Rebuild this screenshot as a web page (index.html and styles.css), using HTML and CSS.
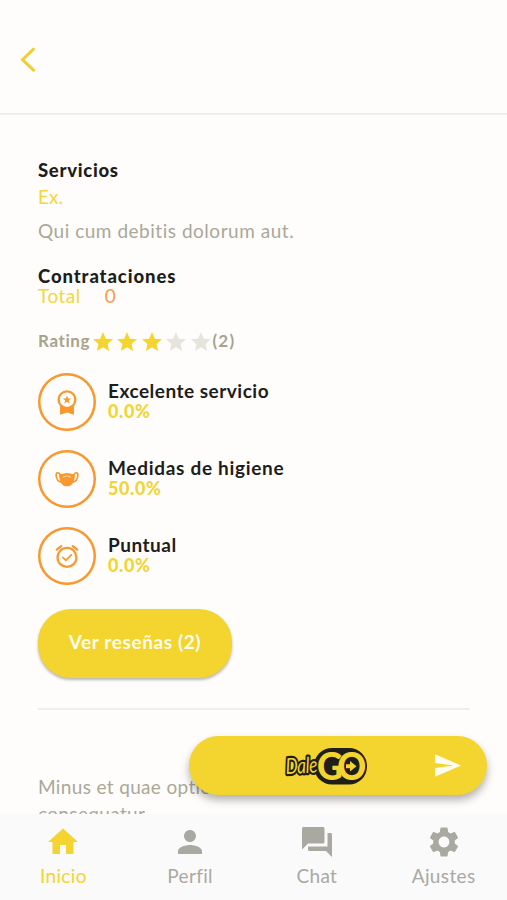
FILE: index.html
```html
<!DOCTYPE html>
<html lang="es">
<head>
<meta charset="utf-8">
<meta name="viewport" content="width=device-width, initial-scale=1">
<title>DaleGO</title>
<link rel="stylesheet" href="styles.css">
</head>
<body>
<div class="app">
  <header class="header">
    <svg class="back" viewBox="0 0 16 26"><path d="M13.500 2.200 2.500 12.700l11 10.500"/></svg>
  </header>
  <main class="content">
    <h2 class="title"><span class="t-serv">Servicios</span></h2>
    <p class="category">Ex.</p>
    <p class="description">Qui cum debitis dolorum aut.</p>
    <h2 class="title hires"><span class="t-cont">Contrataciones</span></h2>
    <p class="total"><span>Total</span><span class="count">0</span></p>
    <div class="rating">
      <span class="rating-label">Rating</span>
      <div class="stars">
        <svg class="star on" viewBox="2 2 20 19"><path d="M12 17.270 18.180 21l-1.640-7.030L22 9.240l-7.190-.61L12 2 9.190 8.630 2 9.240l5.460 4.730L5.820 21z"/></svg>
        <svg class="star on" viewBox="2 2 20 19"><path d="M12 17.270 18.180 21l-1.640-7.030L22 9.240l-7.190-.61L12 2 9.190 8.630 2 9.240l5.460 4.730L5.820 21z"/></svg>
        <svg class="star on" viewBox="2 2 20 19"><path d="M12 17.270 18.180 21l-1.640-7.030L22 9.240l-7.190-.61L12 2 9.190 8.630 2 9.240l5.460 4.730L5.820 21z"/></svg>
        <svg class="star" viewBox="2 2 20 19"><path d="M12 17.270 18.180 21l-1.640-7.030L22 9.240l-7.190-.61L12 2 9.190 8.630 2 9.240l5.460 4.730L5.820 21z"/></svg>
        <svg class="star" viewBox="2 2 20 19"><path d="M12 17.270 18.180 21l-1.640-7.030L22 9.240l-7.190-.61L12 2 9.190 8.630 2 9.240l5.460 4.730L5.820 21z"/></svg>
      </div>
      <span class="rating-count">(2)</span>
    </div>
    <ul class="metrics">
      <li class="metric">
        <span class="ring"><svg viewBox="0 0 28 28"><path class="fill" d="M6.500 17.500h15V27.800L14 25.300 6.500 27.800z"/><circle class="disc" cx="14" cy="11.500" r="9"/><path class="fill" d="m14 7 1.200 3.100 3.300.1-2.600 2.100.9 3.200-2.800-1.800-2.800 1.800.9-3.200-2.600-2.100 3.300-.1z"/></svg></span>
        <div class="metric-text"><span class="metric-name m1">Excelente servicio</span><span class="metric-value">0.0%</span></div>
      </li>
      <li class="metric">
        <span class="ring"><svg viewBox="0 0 28 28"><path class="fill" d="M5.500 8.500c3 .8 5.700-1 8.500-1s5.500 1.800 8.500 1c0 8-2.800 13.300-8.500 13.300S5.500 16.500 5.500 8.500z"/><path class="line" d="M5.800 8.300C3.500 6.300 2 7.500 2.300 10.200c.4 3.700 2 6.500 5 6.900M22.200 8.300c2.300-2 3.800-.8 3.500 1.900-.4 3.700-2 6.500-5 6.900"/><path class="crease" d="M10 11.800q4-2.700 8 0"/></svg></span>
        <div class="metric-text"><span class="metric-name m2">Medidas de higiene</span><span class="metric-value">50.0%</span></div>
      </li>
      <li class="metric">
        <span class="ring"><svg viewBox="0 0 28 28"><circle class="clock" cx="14" cy="15.500" r="10.200"/><path class="bell" d="M3 7.200 7.800 3.300M20.200 3.300 25 7.200"/><path class="tick" d="m9.500 15.500 3.200 3.200 6-6"/></svg></span>
        <div class="metric-text"><span class="metric-name m3">Puntual</span><span class="metric-value">0.0%</span></div>
      </li>
    </ul>
    <button class="reviews">Ver reseñas (2)</button>
    <hr class="divider">
    <p class="comment">Minus et quae optio<br>consequatur.</p>
  </main>
  <button class="hire" aria-label="DaleGO">
    <svg class="logo" viewBox="0 0 84 38">
      <rect class="dark" x="30" y="1" width="53" height="36.500" rx="18"/>
      <g class="dale" transform="translate(2 27) rotate(-3) scale(.78 1)"><text>Dale</text></g>
      <g class="go" transform="translate(33 33) scale(.94 1)"><text>GO</text></g>
      <path class="yellow" d="M62 17.200h4V14l6.500 5.300-6.500 5.200v-3.300h-4z"/>
    </svg>
    <svg class="send" viewBox="2 3 21 18"><path d="M2.010 21 23 12 2.010 3 2 10l15 2-15 2z"/></svg>
  </button>
  <nav class="tabs">
    <a class="tab active"><svg viewBox="0 0 24 24"><path d="M10 20v-6h4v6h5v-8h3L12 3 2 12h3v8z"/></svg><span>Inicio</span></a>
    <a class="tab"><svg viewBox="0 0 24 24"><path d="M12 12c2.210 0 4-1.790 4-4s-1.790-4-4-4-4 1.790-4 4 1.790 4 4 4zm0 2c-2.670 0-8 1.340-8 4v2h16v-2c0-2.660-5.330-4-8-4z"/></svg><span>Perfil</span></a>
    <a class="tab"><svg viewBox="0 0 24 24"><path d="M21 6h-2v9H6v2c0 .55.45 1 1 1h11l4 4V7c0-.55-.45-1-1-1zm-4 6V3c0-.55-.45-1-1-1H3c-.55 0-1 .45-1 1v14l4-4h10c.55 0 1-.45 1-1z"/></svg><span>Chat</span></a>
    <a class="tab"><svg viewBox="0 0 24 24"><path d="M19.140 12.940c.04-.3.060-.61.060-.94 0-.32-.02-.64-.07-.94l2.030-1.580c.18-.14.23-.41.120-.61l-1.920-3.320c-.12-.22-.37-.29-.59-.22l-2.390.96c-.5-.38-1.030-.7-1.620-.94l-.36-2.540c-.04-.24-.24-.41-.48-.41h-3.840c-.24 0-.43.17-.47.41l-.36 2.540c-.59.24-1.130.57-1.620.94l-2.390-.96c-.22-.08-.47 0-.59.22L2.740 8.870c-.12.21-.08.47.120.61l2.030 1.580c-.05.3-.09.63-.09.94s.02.64.07.94l-2.030 1.580c-.18.14-.23.41-.12.61l1.920 3.320c.12.22.37.29.59.22l2.390-.96c.5.38 1.030.7 1.620.94l.36 2.540c.05.24.24.41.48.41h3.840c.24 0 .44-.17.47-.41l.36-2.540c.59-.24 1.130-.56 1.620-.94l2.390.96c.22.080.47 0 .59-.22l1.920-3.320c.12-.22.070-.47-.12-.61l-2.010-1.580zM12 15.600c-1.980 0-3.600-1.620-3.600-3.600s1.620-3.600 3.600-3.600 3.600 1.620 3.600 3.600-1.620 3.600-3.600 3.600z"/></svg><span>Ajustes</span></a>
  </nav>
</div>
</body>
</html>
```
FILE: styles.css
```css
* { box-sizing: border-box; }
body, h2, p, ul { margin: 0; padding: 0; }
body {
  background: #fefdfb;
  color: #1d1d1b;
  font-family: Lato, "Open Sans", sans-serif;
  font-size: 19px;
  line-height: 20px;
  overflow: hidden;
}
svg { display: block; }
button { border: 0; padding: 0; font: inherit; }
.app { position: relative; display: flex; flex-direction: column; height: 900px; overflow: hidden; }
.header { flex: none; height: 115px; border-bottom: 2px solid #efeeec; padding: 47px 0 0 19.500px; }
.back { width: 16px; height: 26px; fill: none; stroke: #f0cf32; stroke-width: 3; stroke-linecap: round; }
.content { flex: 1; min-height: 0; overflow: hidden; padding: 45px 37px 0 38px; white-space: nowrap; }
.title { font-size: 18.500px; line-height: 20px; font-weight: 900; }
.t-serv { letter-spacing: .7px; }
.t-cont { letter-spacing: .9px; }
.category { margin-top: 7px; color: #f3d640; }
.description { margin-top: 14px; color: #a9a899; letter-spacing: .52px; }
.hires { margin-top: 25px; }
.total { display: flex; gap: 24px; color: #f3d640; letter-spacing: .5px; }
.count { color: #fa9c49; }
.rating { display: flex; align-items: center; height: 20px; margin-top: 25px; color: #a5a48c; font-size: 17px; font-weight: 700; }
.rating-label { width: 54.500px; letter-spacing: .6px; }
.stars { display: flex; gap: 4.500px; }
.star { width: 20px; height: 19px; fill: #e5e5dc; }
.star.on { fill: #f4d42f; }
.rating-count { margin-left: 2px; letter-spacing: 1.200px; }
.metrics { list-style: none; display: flex; flex-direction: column; gap: 19px; margin-top: 22px; }
.metric { display: flex; gap: 12.500px; height: 58px; align-items: center; }
.ring { display: flex; align-items: center; justify-content: center; width: 57.500px; height: 57.500px; border-radius: 50%; box-shadow: inset 0 0 0 2.500px #f9982e; }
.ring svg { width: 26px; height: 26px; fill: none; stroke: none; stroke-linecap: round; stroke-linejoin: round; }
.ring .fill { fill: #f9982e; }
.ring .disc { fill: #fefdfb; stroke: #f9982e; stroke-width: 2.500; }
.ring .line { stroke: #f9982e; stroke-width: 1.800; }
.ring .crease { stroke: #fde0b7; stroke-width: 1; }
.ring .clock { stroke: #f9982e; stroke-width: 2.400; }
.ring .bell { stroke: #f9982e; stroke-width: 2.400; }
.ring .tick { stroke: #f9982e; stroke-width: 1.800; }
.metric-text { display: flex; flex-direction: column; margin-top: -3px; font-weight: 700; }
.metric-name { font-size: 19px; letter-spacing: .5px; }
.m2 { letter-spacing: .7px; }
.metric-value { color: #f1d535; font-size: 18px; font-weight: 900; letter-spacing: .6px; }
.reviews { display: block; width: 194px; height: 69px; margin-top: 24px; padding-bottom: 3px; border-radius: 33px; background: #f4d42f; color: #fffdf0; font-weight: 700; letter-spacing: .6px; box-shadow: 0 2px 3px rgba(0,0,0,.28); }
.divider { height: 2px; margin: 30px 0 63px; border: 0; background: #efeeec; }
.comment { color: #a9a899; line-height: 27px; letter-spacing: .35px; }
.hire { position: absolute; z-index: 2; left: 189px; top: 736px; width: 298px; height: 59px; border-radius: 30px; background: #f4d42f; box-shadow: 0 5px 8px rgba(0,0,0,.3); display: flex; align-items: center; padding: 0 26px 0 95px; }
.logo { width: 84px; height: 38px; overflow: visible; }
.logo .dark { fill: #201e19; }
.logo .yellow { fill: #f4d42f; }
.dale text { font: italic 400 22px Lato, sans-serif; letter-spacing: -.5px; fill: #f4d42f; stroke: #201e19; stroke-width: 4.500; stroke-linejoin: round; paint-order: stroke; }
.go text { font: 900 38px Lato, sans-serif; letter-spacing: -6px; fill: #f4d42f; stroke: #201e19; stroke-width: 1; paint-order: stroke; }
.send { width: 26px; height: 23px; margin-left: auto; fill: #fffdf0; }
.tabs { flex: none; display: flex; height: 86px; background: #fafafa; }
.tab { flex: 1; display: flex; flex-direction: column; align-items: center; padding-top: 10px; color: #a9a9a2; }
.tab svg { width: 36px; height: 36px; fill: #a9a9a2; }
.tab span { margin-top: 6px; letter-spacing: .35px; }
.tab.active { color: #f4d42f; }
.tab.active svg { fill: #f4d42f; }
```
